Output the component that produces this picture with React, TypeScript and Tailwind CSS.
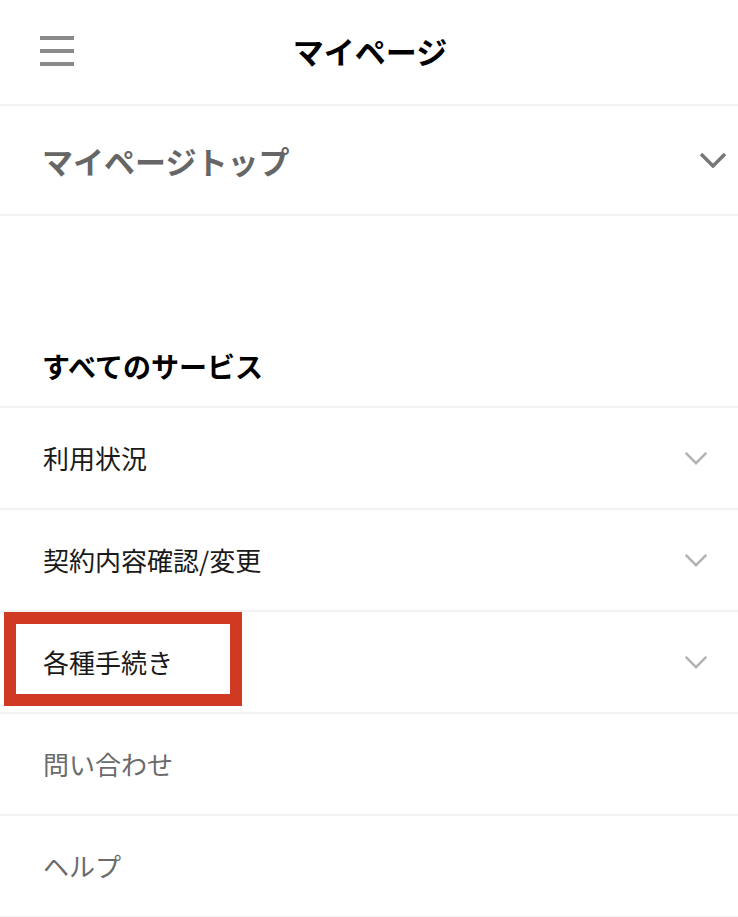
import React from "react";

function Chevron({ className, stroke }: { className?: string; stroke: number }) {
  return (
    <svg viewBox="0 0 28 16" className={className} fill="none">
      <polyline points="2,2 14,14 26,2" stroke="currentColor" strokeWidth={stroke} strokeLinecap="butt" strokeLinejoin="miter" />
    </svg>
  );
}

const rows = [
  { label: "利用状況", chevron: true, dark: true },
  { label: "契約内容確認/変更", chevron: true, dark: true },
  { label: "各種手続き", chevron: true, dark: true, boxed: true },
  { label: "問い合わせ", chevron: false, dark: false },
  { label: "ヘルプ", chevron: false, dark: false },
];

export default function App() {
  return (
    <div
      className="w-[738px] min-h-[917px] bg-white"
      style={{ fontFamily: '"Noto Sans CJK JP", "Noto Sans", sans-serif' }}
    >
      <header className="h-[106px] grid grid-cols-[1fr_auto_1fr] items-center pb-[4px] border-b-2 border-[#f2f2f2]">
        <div className="pl-[40px] flex flex-col gap-[9px] pt-[2px]">
          <span className="block w-[34px] h-[4px] bg-[#8a8a8a]" />
          <span className="block w-[34px] h-[4px] bg-[#8a8a8a]" />
          <span className="block w-[34px] h-[4px] bg-[#8a8a8a]" />
        </div>
        <h1 className="text-[31px] font-bold text-black leading-none pl-[2px]">マイページ</h1>
        <div />
      </header>

      <div className="h-[110px] flex items-center justify-between pl-[42px] pr-[11px] border-b-2 border-[#f2f2f2]">
        <span className="text-[31px] font-bold text-[#666666] leading-none">マイページトップ</span>
        <Chevron className="w-[28px] h-[16px] text-[#777777]" stroke={3.5} />
      </div>

      <div className="h-[192px] flex items-end pb-[20px] pl-[42px] border-b-2 border-[#f2f2f2]">
        <h2 className="text-[28px] font-bold text-black leading-[40px]">すべてのサービス</h2>
      </div>

      {rows.map((r) => (
        <div
          key={r.label}
          className="relative h-[102px] flex items-center justify-between pl-[43px] pr-[30px] border-b-2 border-[#f2f2f2]"
        >
          <span className={`text-[26px] leading-none ${r.dark ? "text-[#1a1a1a]" : "text-[#6b6b6b]"}`}>{r.label}</span>
          {r.chevron && <Chevron className="w-[24px] h-[14px] text-[#b3b3b3]" stroke={3} />}
          {r.boxed && (
            <div className="absolute left-[4px] top-0 w-[238px] h-[94px] border-[12px] border-[#d13a22]" />
          )}
        </div>
      ))}
    </div>
  );
}
